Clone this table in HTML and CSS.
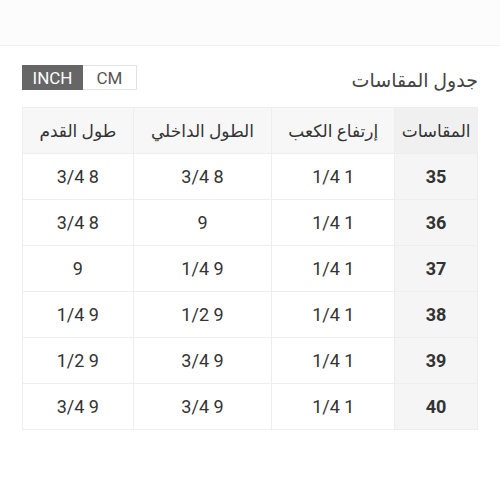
FILE: index.html
```html
<!DOCTYPE html>
<html>
<head>
<meta charset="utf-8">
<link rel="stylesheet" href="styles.css">
</head>
<body>
<div class="topbar"></div>
<div class="content">
  <div class="headline">
    <h2 class="title" dir="rtl">جدول المقاسات</h2>
    <div class="toggle">
      <span class="opt active">INCH</span>
      <span class="opt">CM</span>
    </div>
  </div>
  <table class="sizes" dir="rtl">
    <colgroup>
      <col class="c1"><col class="c2"><col class="c3"><col class="c4">
    </colgroup>
    <thead>
      <tr><th class="h1">المقاسات</th><th>إرتفاع الكعب</th><th>الطول الداخلي</th><th>طول القدم</th></tr>
    </thead>
    <tbody>
      <tr><td class="size">35</td><td>1 1/4</td><td>8 3/4</td><td>8 3/4</td></tr>
      <tr><td class="size">36</td><td>1 1/4</td><td>9</td><td>8 3/4</td></tr>
      <tr><td class="size">37</td><td>1 1/4</td><td>9 1/4</td><td>9</td></tr>
      <tr><td class="size">38</td><td>1 1/4</td><td>9 1/2</td><td>9 1/4</td></tr>
      <tr><td class="size">39</td><td>1 1/4</td><td>9 3/4</td><td>9 1/2</td></tr>
      <tr><td class="size">40</td><td>1 1/4</td><td>9 3/4</td><td>9 3/4</td></tr>
    </tbody>
  </table>
</div>
</body>
</html>
```
FILE: styles.css
```css
html, body {
  margin: 0;
  padding: 0;
  background: #fff;
  font-family: Roboto, "DejaVu Sans", sans-serif;
  color: #333;
}
.topbar {
  height: 45px;
  background: #fcfcfc;
  border-bottom: 1px solid #f1f1f1;
}
.content {
  padding: 19px 22px 0 22px;
}
.headline {
  display: flex;
  flex-direction: row-reverse;
  justify-content: space-between;
  align-items: flex-start;
  height: 42px;
}
.title {
  margin: 4px 0 0 0;
  font-size: 19px;
  font-weight: normal;
  color: #444;
}
.toggle {
  display: flex;
  height: 25px;
  border: 1px solid #e2e2e2;
  box-sizing: border-box;
  width: 115px;
}
.opt {
  display: flex;
  align-items: center;
  justify-content: center;
  font-size: 17px;
  color: #555;
}
.opt.active {
  background: #666;
  color: #fff;
  width: 61px;
  margin: -1px 0 -1px -1px;
}
.opt:not(.active) {
  flex: 1;
}
.sizes {
  width: 100%;
  border-collapse: collapse;
  table-layout: fixed;
}
.c1 { width: 18.2%; }
.c2 { width: 27%; }
.c3 { width: 30.5%; }
.c4 { width: 24.3%; }
.sizes th, .sizes td {
  border: 1px solid #eeeeee;
  height: 45px;
  padding: 0;
  text-align: center;
  font-size: 18px;
  color: #333;
}
.sizes thead th {
  background: #f7f7f7;
  font-weight: normal;
  font-size: 17px;
}
.sizes thead th.h1 {
  background: #f0f0f0;
}
.sizes td.size {
  background: #f5f5f5;
  font-weight: bold;
  color: #333;
}
```
